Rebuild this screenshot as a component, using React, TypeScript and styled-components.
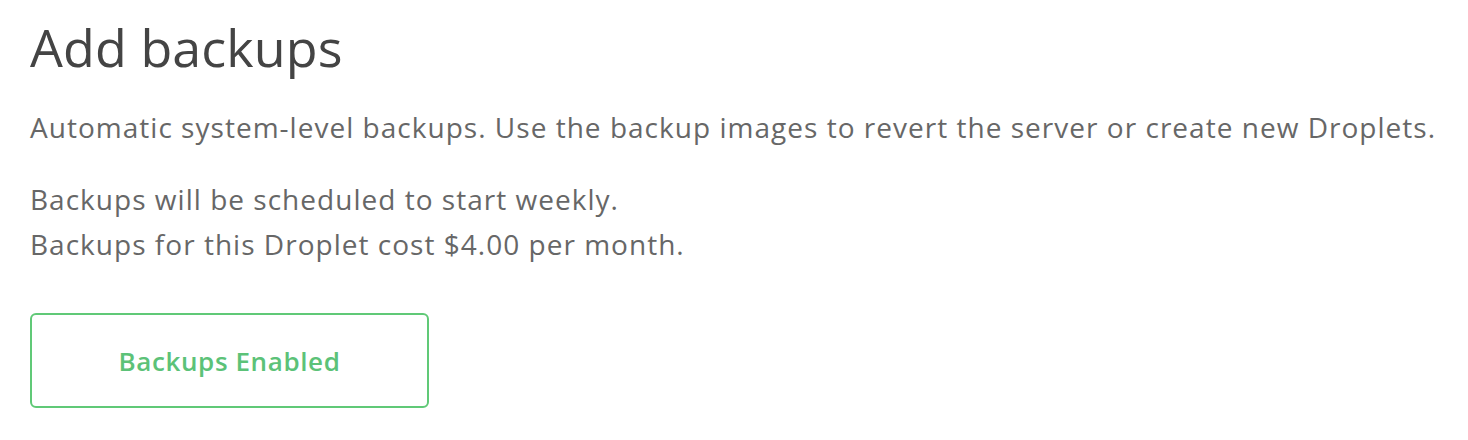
import React from "react";
import styled, { createGlobalStyle } from "styled-components";

const Global = createGlobalStyle`
  html, body { margin: 0; padding: 0; background: #fff; }
  body { font-family: "Open Sans", "Liberation Sans", sans-serif; -webkit-font-smoothing: antialiased; }
`;

const Section = styled.section`
  display: flex;
  flex-direction: column;
  align-items: flex-start;
  padding: 17px 30px 0 30px;
`;

const Title = styled.h2`
  margin: 0;
  font-size: 52px;
  font-weight: 400;
  line-height: 60px;
  color: #444444;
  letter-spacing: 0.1px;
`;

const Text = styled.p<{ $mt?: number }>`
  margin: ${(p) => p.$mt ?? 0}px 0 0 0;
  font-size: 28px;
  line-height: 45px;
  color: #676767;
  letter-spacing: 1.02px;
  white-space: nowrap;
`;

const Button = styled.button`
  margin-top: 46px;
  width: 399px;
  height: 95px;
  box-sizing: border-box;
  border: 2px solid #60c977;
  border-radius: 6px;
  background: #fff;
  color: #5cc278;
  font-family: inherit;
  font-size: 26px;
  font-weight: 600;
  letter-spacing: 0.6px;
  cursor: pointer;
`;

export default function App() {
  return (
    <>
      <Global />
      <Section>
        <Title>Add backups</Title>
        <Text $mt={28}>
          Automatic system-level backups. Use the backup images to revert the server or create new Droplets.
        </Text>
        <Text $mt={27}>
          Backups will be scheduled to start weekly.
          <br />
          Backups for this Droplet cost $4.00 per month.
        </Text>
        <Button>Backups Enabled</Button>
      </Section>
    </>
  );
}
